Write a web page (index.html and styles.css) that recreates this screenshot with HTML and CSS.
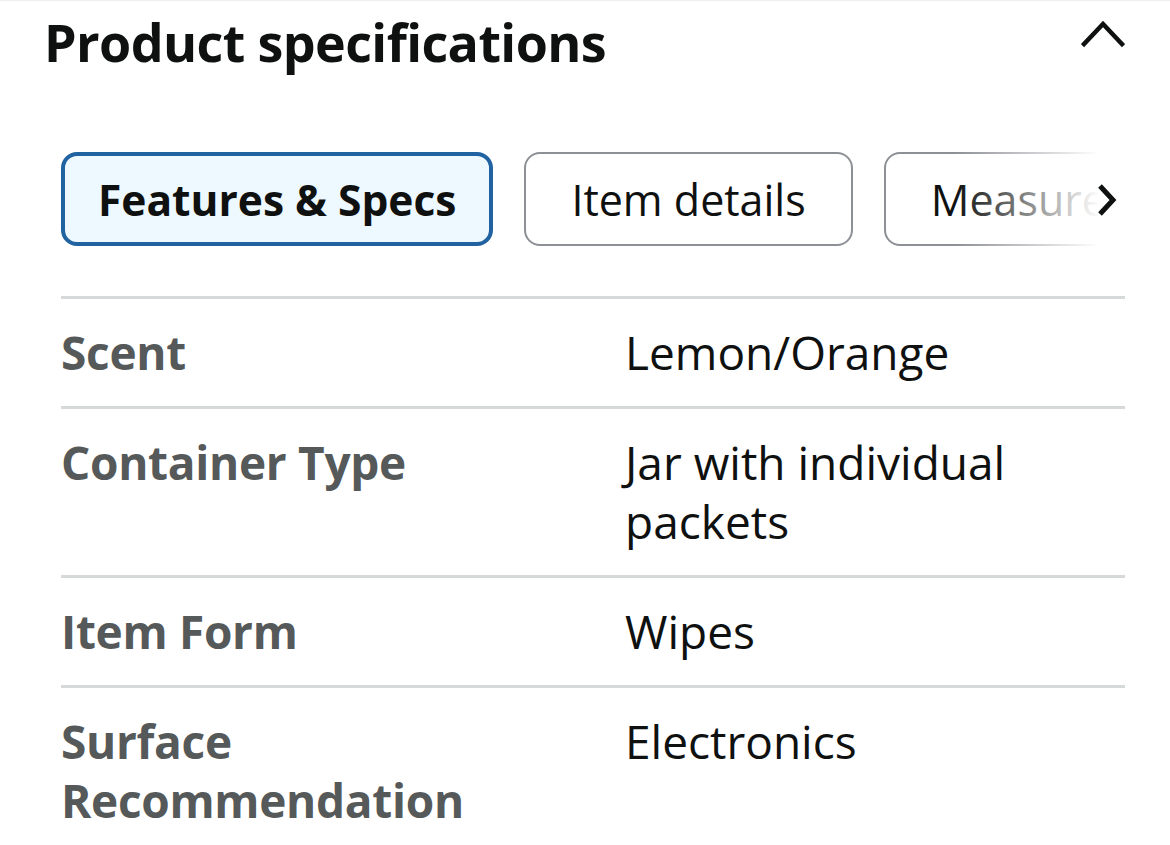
FILE: index.html
```html
<!DOCTYPE html>
<html>
<head>
<meta charset="utf-8">
<link rel="stylesheet" href="styles.css">
</head>
<body>
<div class="page">
  <div class="header">
    <h2 class="title">Product specifications</h2>
    <svg class="chev-up" width="44" height="30" viewBox="0 0 44 30"><polyline points="3,25 22,5 41,25" fill="none" stroke="#0f1111" stroke-width="4.5" stroke-linecap="square"/></svg>
  </div>
  <div class="tabs-wrap">
    <div class="tabs">
      <div class="tab active">Features &amp; Specs</div>
      <div class="tab">Item details</div>
      <div class="tab">Measurements</div>
    </div>
    <div class="fade"></div>
    <svg class="chev-right" width="24" height="36" viewBox="0 0 24 36"><polyline points="5,4 18,18 5,32" fill="none" stroke="#0f1111" stroke-width="5"/></svg>
  </div>
  <div class="table">
    <div class="row"><div class="label">Scent</div><div class="value">Lemon/Orange</div></div>
    <div class="row"><div class="label">Container Type</div><div class="value">Jar with individual packets</div></div>
    <div class="row"><div class="label">Item Form</div><div class="value">Wipes</div></div>
    <div class="row"><div class="label">Surface Recommendation</div><div class="value">Electronics</div></div>
  </div>
</div>
</body>
</html>
```
FILE: styles.css
```css
html, body { margin: 0; padding: 0; background: #fff; }
body { font-family: "Open Sans", "Noto Sans", sans-serif; color: #0f1111; }
.page { border-top: 1px solid #eeeeee; width: 1170px; height: 844px; overflow: hidden; }
.header { display: flex; justify-content: space-between; align-items: flex-start; padding: 0 45px 0 44px; height: 100px; }
.title { margin: 0; font-size: 52px; font-weight: 700; line-height: 82px; letter-spacing: -0.6px; }
.chev-up { margin-top: 18px; }
.tabs-wrap { position: relative; margin: 51px 45px 0 61px; overflow: hidden; height: 94px; }
.tabs { display: flex; gap: 31px; }
.tab { flex: none; box-sizing: border-box; height: 94px; display: flex; align-items: center; padding: 0 45px; border: 2px solid #8d9096; border-radius: 16px; font-size: 43px; background: #fff; }
.tab.active { border: 4px solid #2162a1; background: #edf8ff; font-weight: 700; padding: 0 33px; font-size: 42.5px; }
.fade { position: absolute; top: 0; right: 0; width: 170px; height: 100%; background: linear-gradient(to right, rgba(255,255,255,0), #fff 85%); }
.chev-right { position: absolute; right: 6px; top: 30px; }
.table { margin: 50px 45px 0 61px; }
.row { display: grid; grid-template-columns: 564px 1fr; border-top: 3px solid #d5d9d9; padding: 24px 0 24px; font-size: 46px; line-height: 59px; }
.label { font-weight: 700; color: #565959; padding-right: 30px; letter-spacing: -0.3px; }
.value { color: #0f1111; padding-right: 80px; }
```
